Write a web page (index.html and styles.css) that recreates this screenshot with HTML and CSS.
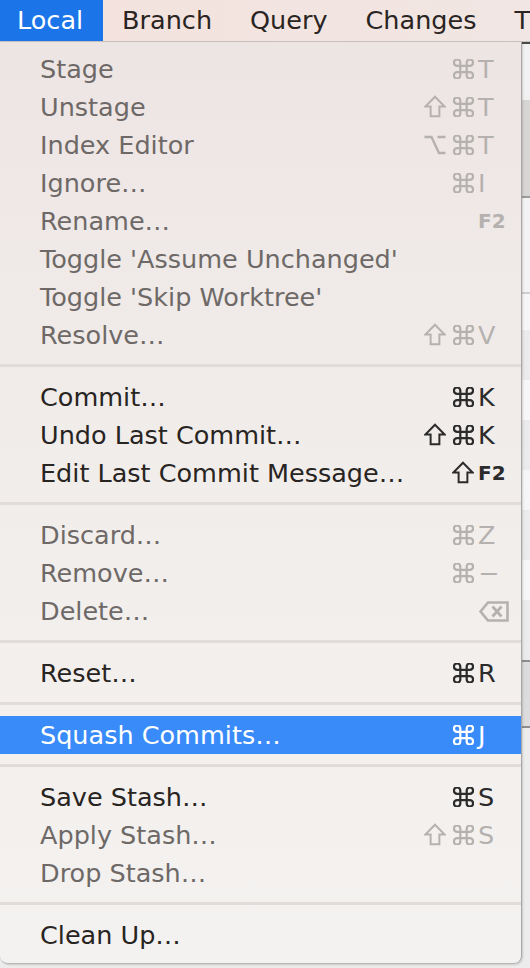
FILE: index.html
```html
<!DOCTYPE html>
<html>
<head>
<meta charset="utf-8">
<link rel="stylesheet" href="styles.css">
</head>
<body>
<svg class="defs" width="0" height="0" aria-hidden="true">
  <defs>
    <symbol id="cmd" viewBox="2.6 2.6 18.8 18.8">
      <path d="M15 6v12a3 3 0 1 0 3-3H6a3 3 0 1 0 3 3V6a3 3 0 1 0-3 3h12a3 3 0 1 0-3-3" fill="none" stroke="currentColor" stroke-width="2.1"/>
    </symbol>
    <symbol id="shift" viewBox="0 0 20 21">
      <path d="M10 1.6 L18.6 10.4 H14 V19.5 H6 V10.4 H1.4 Z" fill="none" stroke="currentColor" stroke-width="1.8" stroke-linejoin="miter"/>
    </symbol>
    <symbol id="opt" viewBox="0 0 22 20">
      <path d="M0.5 2 H7.5 L15 18 H21.5 M13.5 2 H21.5" fill="none" stroke="currentColor" stroke-width="2.4"/>
    </symbol>
  </defs>
</svg>
<div class="menubar">
  <span class="mb-item active">Local</span>
  <span class="mb-item">Branch</span>
  <span class="mb-item">Query</span>
  <span class="mb-item">Changes</span>
  <span class="mb-item">T</span>
</div>
<div class="menu">
  <div class="group">
    <div class="item dis"><span class="label">Stage</span><span class="mods"><svg class="g-cmd"><use href="#cmd"/></svg></span><span class="key">T</span></div>
    <div class="item dis"><span class="label">Unstage</span><span class="mods"><svg class="g-shift"><use href="#shift"/></svg><svg class="g-cmd"><use href="#cmd"/></svg></span><span class="key">T</span></div>
    <div class="item dis"><span class="label">Index Editor</span><span class="mods"><svg class="g-opt"><use href="#opt"/></svg><svg class="g-cmd"><use href="#cmd"/></svg></span><span class="key">T</span></div>
    <div class="item dis"><span class="label">Ignore…</span><span class="mods"><svg class="g-cmd"><use href="#cmd"/></svg></span><span class="key">I</span></div>
    <div class="item dis"><span class="label">Rename…</span><span class="mods"></span><span class="key fn">F2</span></div>
    <div class="item dis"><span class="label">Toggle 'Assume Unchanged'</span><span class="mods"></span><span class="key"></span></div>
    <div class="item dis"><span class="label">Toggle 'Skip Worktree'</span><span class="mods"></span><span class="key"></span></div>
    <div class="item dis"><span class="label">Resolve…</span><span class="mods"><svg class="g-shift"><use href="#shift"/></svg><svg class="g-cmd"><use href="#cmd"/></svg></span><span class="key">V</span></div>
  </div>
  <div class="sep"></div>
  <div class="group">
    <div class="item"><span class="label">Commit…</span><span class="mods"><svg class="g-cmd"><use href="#cmd"/></svg></span><span class="key">K</span></div>
    <div class="item"><span class="label">Undo Last Commit…</span><span class="mods"><svg class="g-shift"><use href="#shift"/></svg><svg class="g-cmd"><use href="#cmd"/></svg></span><span class="key">K</span></div>
    <div class="item"><span class="label">Edit Last Commit Message…</span><span class="mods"><svg class="g-shift"><use href="#shift"/></svg></span><span class="key fn">F2</span></div>
  </div>
  <div class="sep"></div>
  <div class="group">
    <div class="item dis"><span class="label">Discard…</span><span class="mods"><svg class="g-cmd"><use href="#cmd"/></svg></span><span class="key">Z</span></div>
    <div class="item dis"><span class="label">Remove…</span><span class="mods"><svg class="g-cmd"><use href="#cmd"/></svg></span><span class="key">−</span></div>
    <div class="item dis"><span class="label">Delete…</span><span class="mods"></span><span class="key"><svg class="del" viewBox="0 0 30 21" width="30" height="21"><path d="M1.5 10.5 L9 1.5 H28.5 V19.5 H9 Z" fill="none" stroke="currentColor" stroke-width="2.6" stroke-linejoin="miter"/><path d="M13.5 5.5 L22.5 15.5 M22.5 5.5 L13.5 15.5" stroke="currentColor" stroke-width="2.8"/></svg></span></div>
  </div>
  <div class="sep"></div>
  <div class="group">
    <div class="item"><span class="label">Reset…</span><span class="mods"><svg class="g-cmd"><use href="#cmd"/></svg></span><span class="key">R</span></div>
  </div>
  <div class="sep"></div>
  <div class="group">
    <div class="item hl"><span class="label">Squash Commits…</span><span class="mods"><svg class="g-cmd"><use href="#cmd"/></svg></span><span class="key">J</span></div>
  </div>
  <div class="sep"></div>
  <div class="group">
    <div class="item"><span class="label">Save Stash…</span><span class="mods"><svg class="g-cmd"><use href="#cmd"/></svg></span><span class="key">S</span></div>
    <div class="item dis"><span class="label">Apply Stash…</span><span class="mods"><svg class="g-shift"><use href="#shift"/></svg><svg class="g-cmd"><use href="#cmd"/></svg></span><span class="key">S</span></div>
    <div class="item dis"><span class="label">Drop Stash…</span><span class="mods"></span><span class="key"></span></div>
  </div>
  <div class="sep"></div>
  <div class="group">
    <div class="item"><span class="label">Clean Up…</span><span class="mods"></span><span class="key"></span></div>
  </div>
</div>
</body>
</html>
```
FILE: styles.css
```css
html, body {
  margin: 0;
  padding: 0;
}
body {
  width: 530px;
  height: 968px;
  overflow: hidden;
  font-family: "DejaVu Sans", "Liberation Sans", sans-serif;
  background:
    linear-gradient(to bottom,
      #4a4a4a 42px, #4a4a4a 44px,
      #f1f1f1 44px, #f1f1f1 100px,
      #d8d6d5 100px, #d8d6d5 196px,
      #9c9c9c 196px, #9c9c9c 198px,
      #f3f3f3 198px, #f3f3f3 292px,
      #cfcfcf 292px, #cfcfcf 294px,
      #f6f6f6 294px, #f6f6f6 330px,
      #ebebeb 330px, #ebebeb 380px,
      #f6f6f6 380px, #f6f6f6 420px,
      #ebebeb 420px, #ebebeb 470px,
      #f6f6f6 470px, #f6f6f6 510px,
      #ebebeb 510px, #ebebeb 560px,
      #f6f6f6 560px, #f6f6f6 600px,
      #ebebeb 600px, #ebebeb 660px,
      #8e8e8e 660px, #8e8e8e 662px,
      #dcdcdc 662px, #dcdcdc 726px,
      #8e8e8e 726px, #8e8e8e 728px,
      #ececec 728px);
}
.defs {
  display: block;
  width: 0;
  height: 0;
  overflow: hidden;
}

.menubar {
  display: flex;
  height: 41px;
  align-items: stretch;
  background: linear-gradient(to right, #f4e2dd, #f1e6e3);
  border-bottom: 1px solid #c9c1bf;
  white-space: nowrap;
  overflow: hidden;
  font-size: 25.5px;
  color: #2a2422;
}
.mb-item {
  display: flex;
  align-items: center;
  padding: 0 19px 2px;
}
.mb-item.active {
  background: #1c74e9;
  color: #ffffff;
  padding-left: 17px;
  padding-right: 20px;
}

.menu {
  width: 521px;
  padding: 8px 0 9px;
  background: linear-gradient(to bottom, #ede5e3, #f1edeb 45%, #f4f2f0);
  border-right: 1px solid #a9a7a6;
  border-bottom: 1px solid #b9b7b6;
  border-bottom-left-radius: 8px;
  border-bottom-right-radius: 8px;
  box-shadow: 1px 1px 2px rgba(0, 0, 0, 0.15);
}
.group {
  display: flex;
  flex-direction: column;
}
.item {
  display: grid;
  grid-template-columns: 1fr auto 32px;
  column-gap: 4px;
  align-items: center;
  height: 38px;
  padding: 0 11px 0 40px;
  font-size: 25.5px;
  color: #282422;
  white-space: nowrap;
}
.item .mods {
  display: flex;
  justify-content: flex-end;
  align-items: center;
  gap: 7px;
  color: #2b2b2b;
  padding-bottom: 1px;
}
.g-cmd {
  width: 21px;
  height: 20px;
}
.g-shift {
  width: 22px;
  height: 23px;
}
.g-opt {
  width: 22px;
  height: 20px;
}
.item .key {
  display: flex;
  align-items: center;
  color: #2b2b2b;
  font-size: 25.5px;
}
.item .key.fn {
  font-size: 20px;
  font-weight: bold;
}
.item.dis {
  color: #6e6967;
}
.item.dis .mods,
.item.dis .key {
  color: #b5b1af;
}
.item.hl {
  background: #3a8bfa;
  color: #ffffff;
}
.item.hl .mods,
.item.hl .key {
  color: #ffffff;
}
.del {
  display: block;
  margin-left: 1px;
}
.sep {
  height: 3px;
  margin: 10px 0 11px;
  background: #e1dcda;
}
```
